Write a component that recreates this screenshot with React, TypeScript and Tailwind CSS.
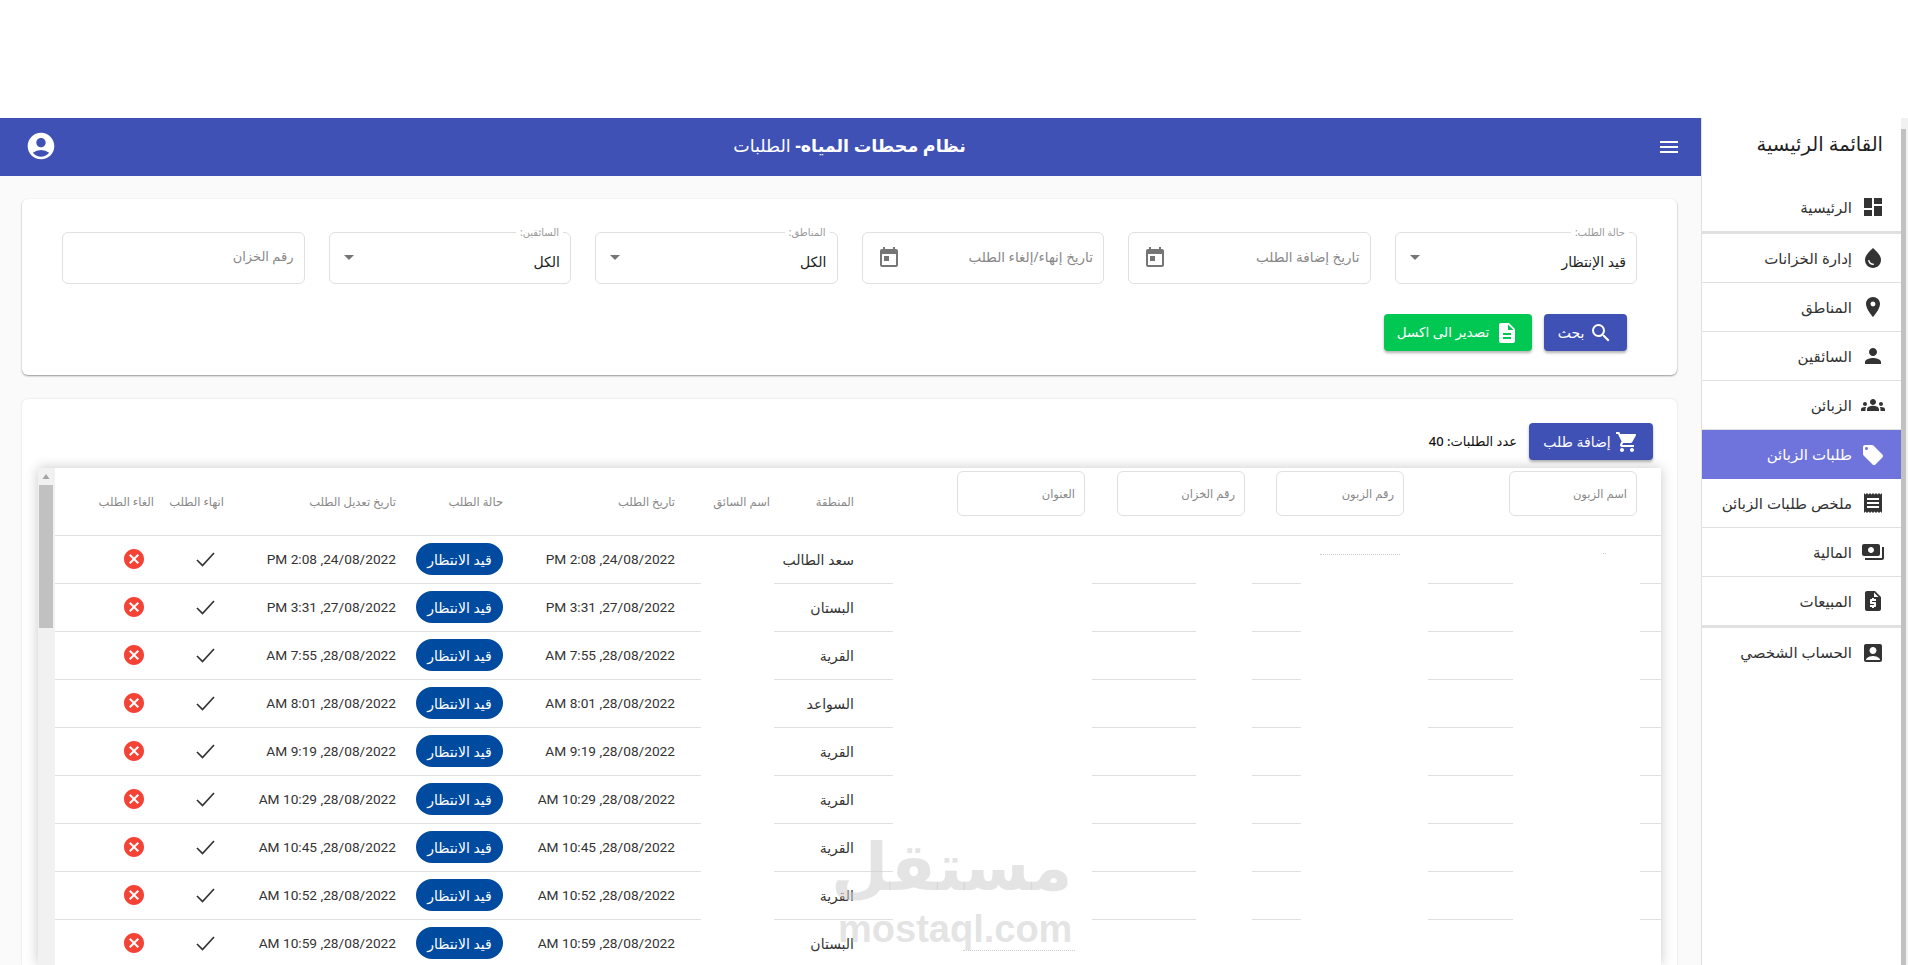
import {
  MdAccountBox,
  MdAccountCircle,
  MdArrowDropDown,
  MdCancel,
  MdDashboard,
  MdDescription,
  MdGroups,
  MdLocalOffer,
  MdMenu,
  MdPayments,
  MdPerson,
  MdPlace,
  MdReceipt,
  MdRequestQuote,
  MdSearch,
  MdShoppingCart,
  MdToday,
  MdWaterDrop,
} from "react-icons/md";

const navItems = [
  { label: "الرئيسية", icon: MdDashboard, className: "h-[51px] border-b-[3px]" },
  { label: "إدارة الخزانات", icon: MdWaterDrop, className: "h-[49px] border-b" },
  { label: "المناطق", icon: MdPlace, className: "h-[49px] border-b" },
  { label: "السائقين", icon: MdPerson, className: "h-[49px] border-b" },
  { label: "الزبائن", icon: MdGroups, className: "h-[49px] border-b" },
  { label: "طلبات الزبائن", icon: MdLocalOffer, className: "h-[49px] bg-[#6f74dd] text-white" },
  { label: "ملخص طلبات الزبائن", icon: MdReceipt, className: "h-[49px] border-b" },
  { label: "المالية", icon: MdPayments, className: "h-[49px] border-b" },
  { label: "المبيعات", icon: MdRequestQuote, className: "h-[51px] border-b-[3px]" },
  { label: "الحساب الشخصي", icon: MdAccountBox, className: "h-[49px]" },
];

const orders = [
  ["سعد الطالب", "24/08/2022, 2:08 PM"],
  ["البستان", "27/08/2022, 3:31 PM"],
  ["القرية", "28/08/2022, 7:55 AM"],
  ["السواعد", "28/08/2022, 8:01 AM"],
  ["القرية", "28/08/2022, 9:19 AM"],
  ["القرية", "28/08/2022, 10:29 AM"],
  ["القرية", "28/08/2022, 10:45 AM"],
  ["القرية", "28/08/2022, 10:52 AM"],
  ["البستان", "28/08/2022, 10:59 AM"],
];

function Sidebar() {
  return (
    <aside className="w-[200px] shrink-0 border-l border-[#e0e0e0] bg-white">
      <div className="h-[55px] pt-[12px] pr-[18px] text-[19.5px] leading-[28px] text-[#222]">القائمة الرئيسية</div>
      <div className="h-[10px]" />
      {navItems.map((item) => (
        <div key={item.label} className={"flex items-center gap-[9px] pr-[16px] border-[#e0e0e0] text-[#333] text-[15px] " + item.className}>
          <item.icon size={24} className="shrink-0" />
          <span>{item.label}</span>
        </div>
      ))}
    </aside>
  );
}

function SelectField({ label, value }: { label: string; value: string }) {
  return (
    <div className="relative h-[52px] rounded-md border border-[#e0e0e0] bg-white flex items-center justify-between px-[10px]">
      <span className="absolute -top-[8px] right-[7px] bg-white px-1 text-[10px] leading-[14px] text-[#999]">{label}</span>
      <span className="mt-[7px] text-[14px] text-[#222]">{value}</span>
      <MdArrowDropDown size={24} className="text-[#757575] -mt-[3px] -ml-[3px]" />
    </div>
  );
}

function DateField({ label }: { label: string }) {
  return (
    <div className="h-[52px] rounded-md border border-[#e0e0e0] bg-white flex items-center justify-between pr-[10px] pl-[14px]">
      <span className="text-[13.5px] text-[#888] -mt-[2px]">{label}</span>
      <MdToday size={24} className="text-[#757575]" />
    </div>
  );
}

function Filters() {
  return (
    <section className="h-[176px] shrink-0 rounded-md bg-white shadow-[0_1px_2px_rgba(0,0,0,0.4)] pt-[33px] px-10">
      <div className="grid grid-cols-6 gap-6">
        <SelectField label="حالة الطلب:" value="قيد الإنتظار" />
        <DateField label="تاريخ إضافة الطلب" />
        <DateField label="تاريخ إنهاء/إلغاء الطلب" />
        <SelectField label="المناطق:" value="الكل" />
        <SelectField label="السائقين:" value="الكل" />
        <div className="h-[52px] rounded-md border border-[#e0e0e0] bg-white flex items-center pr-[10px]">
          <span className="text-[13px] text-[#888] -mt-[2px]">رقم الخزان</span>
        </div>
      </div>
      <div className="mt-[30px] pr-[10px] flex gap-3">
        <button className="h-[37px] w-[83px] rounded bg-[#3f51b5] text-white text-[14px] font-medium flex items-center justify-center gap-[5px] shadow-[0_2px_3px_rgba(0,0,0,0.3)]">
          <MdSearch size={24} />
          بحث
        </button>
        <button className="h-[37px] w-[148px] rounded bg-[#00c853] text-white text-[13.5px] font-medium flex items-center justify-center gap-[6px] shadow-[0_2px_3px_rgba(0,0,0,0.3)]">
          <MdDescription size={24} />
          تصدير الى اكسل
        </button>
      </div>
    </section>
  );
}

function HeaderInput({ label }: { label: string }) {
  return (
    <div className="h-[45px] w-[128px] rounded-md border border-[#e0e0e0] flex items-center pr-[9px] text-[11.5px] text-[#888]">
      {label}
    </div>
  );
}

function CheckIcon() {
  return (
    <svg width="24" height="24" viewBox="0 0 24 24" fill="none" stroke="#333" strokeWidth="1.7">
      <path d="M4 13 L9.5 18.5 L21 6" />
    </svg>
  );
}

function OrdersTable() {
  return (
    <div className="relative flex flex-1 min-h-0 mx-4 shadow-[0_0_12px_rgba(0,0,0,0.22)] overflow-hidden bg-white">
      <div className="relative flex-1">
        <table className="w-[1606px] table-fixed border-collapse text-right">
          <colgroup>
            <col className="w-[241px]" />
            <col className="w-[159px]" />
            <col className="w-[160px]" />
            <col className="w-[231px]" />
            <col className="w-[84px]" />
            <col className="w-[95px]" />
            <col className="w-[172px]" />
            <col className="w-[107px]" />
            <col className="w-[172px]" />
            <col className="w-[70px]" />
            <col className="w-[115px]" />
          </colgroup>
          <thead>
            <tr className="h-[67px] border-b border-[#e0e0e0] text-[11.5px] text-[#888] whitespace-nowrap">
              <th className="align-top pt-[3px] pr-[24px] font-normal"><HeaderInput label="اسم الزبون" /></th>
              <th className="align-top pt-[3px] pr-[16px] font-normal"><HeaderInput label="رقم الزبون" /></th>
              <th className="align-top pt-[3px] pr-[16px] font-normal"><HeaderInput label="رقم الخزان" /></th>
              <th className="align-top pt-[3px] pr-[16px] font-normal"><HeaderInput label="العنوان" /></th>
              <th className="pr-[16px] font-normal">المنطقة</th>
              <th className="pr-[16px] font-normal">اسم السائق</th>
              <th className="pr-[16px] font-normal">تاريخ الطلب</th>
              <th className="pr-[16px] font-normal">حالة الطلب</th>
              <th className="pr-[16px] font-normal">تاريخ تعديل الطلب</th>
              <th className="pr-[16px] font-normal">انهاء الطلب</th>
              <th className="pr-[16px] font-normal">الغاء الطلب</th>
            </tr>
          </thead>
          <tbody>
            {orders.map(([area, date], i) => (
              <tr key={i} className="h-[48px] border-b border-[#e0e0e0] text-[14px] text-[#333]">
                <td />
                <td />
                <td />
                <td />
                <td className="pr-[16px] whitespace-nowrap">{area}</td>
                <td />
                <td className="pr-[16px] whitespace-nowrap text-[13.7px] font-['Roboto',sans-serif]">{date}</td>
                <td className="pr-[16px]">
                  <span className="inline-flex h-[32px] w-[87px] items-center justify-center rounded-full bg-[#004ba0] text-white text-[14px]">قيد الانتظار</span>
                </td>
                <td className="pr-[16px] whitespace-nowrap text-[13.7px] font-['Roboto',sans-serif]">{date}</td>
                <td className="pr-[23px]"><CheckIcon /></td>
                <td className="pr-[24px]"><MdCancel size={24} className="text-[#f44336]" /></td>
              </tr>
            ))}
          </tbody>
        </table>
        {/* blanked out customer data */}
        <div className="absolute top-[68px] bottom-0 left-[646px] w-[73px] bg-white" />
        <div className="absolute top-[68px] bottom-0 left-[838px] w-[199px] bg-white" />
        <div className="absolute top-[68px] bottom-0 left-[1141px] w-[56px] bg-white" />
        <div className="absolute top-[68px] bottom-0 left-[1246px] w-[127px] bg-white" />
        <div className="absolute top-[68px] bottom-0 left-[1458px] w-[127px] bg-white" />
        <div className="absolute top-[86px] left-[1265px] w-[80px] border-t border-dotted border-[#ccc]" />
        <div className="absolute top-[85px] left-[1548px] w-[3px] border-t border-dotted border-[#ccc]" />
        <div className="absolute top-[482px] left-[908px] w-[112px] border-t border-dotted border-[#ccc]" />
      </div>
      <div className="w-[17px] shrink-0 bg-[#f1f1f1] pl-[1px] pr-[2px] flex flex-col items-center">
        <svg width="8" height="17" viewBox="0 0 8 17"><path d="M4 6 L7.5 11 L0.5 11 Z" fill="#a3a3a3" /></svg>
        <div className="w-full h-[143px] bg-[#c1c1c1]" />
      </div>
    </div>
  );
}

export default function App() {
  return (
    <div dir="rtl" className="relative h-screen overflow-hidden bg-white font-['Noto_Sans','DejaVu_Sans',sans-serif]">
      <div className="h-[118px]" />
      <div className="flex h-[847px]">
        <div className="w-[7px] shrink-0 bg-[#f1f1f1] pr-[2px] pt-[11px]">
          <div className="h-full bg-[#c1c1c1]" />
        </div>
        <Sidebar />
        <main className="flex-1 min-w-0 bg-[#fafafa] flex flex-col">
          <header className="h-[58px] shrink-0 bg-[#3f51b5] text-white grid grid-cols-[1fr_auto_1fr] items-center pr-[20px] pl-[25px]">
            <MdMenu size={24} />
            <div className="text-[17.5px] -mt-[4px] pr-[7px]">
              <span className="font-bold">نظام محطات المياه-</span> الطلبات
            </div>
            <MdAccountCircle size={32} className="justify-self-end -mt-[2px]" />
          </header>
          <div className="flex-1 min-h-0 flex flex-col pt-[23px] pr-[24px] pl-[22px] overflow-hidden">
            <Filters />
            <section className="flex-1 min-h-0 mt-[24px] rounded-t-md bg-white shadow-[0_0_2px_rgba(0,0,0,0.15)] flex flex-col pt-[24px]">
              <div className="h-[37px] shrink-0 mb-[8px] pr-[24px] flex items-center gap-[12px]">
                <button className="h-[37px] w-[124px] rounded bg-[#3f51b5] text-white text-[14px] font-medium flex items-center justify-center gap-[4px] shadow-[0_2px_3px_rgba(0,0,0,0.3)]">
                  <MdShoppingCart size={24} />
                  إضافة طلب
                </button>
                <span className="text-[13px] font-medium text-[#111]">عدد الطلبات: 40</span>
              </div>
              <OrdersTable />
            </section>
          </div>
        </main>
      </div>
      {/* watermark */}
      <div dir="ltr" className="absolute left-[838px] top-[822px] w-[232px] text-center text-[rgba(205,205,205,0.55)] pointer-events-none">
        <div className="text-[66px] leading-[84px] font-bold -translate-x-[7px]">مستقل</div>
        <div className="text-[38px] leading-[38px] font-bold mt-[4px] font-['Liberation_Sans',sans-serif]">mostaql.com</div>
      </div>
    </div>
  );
}
